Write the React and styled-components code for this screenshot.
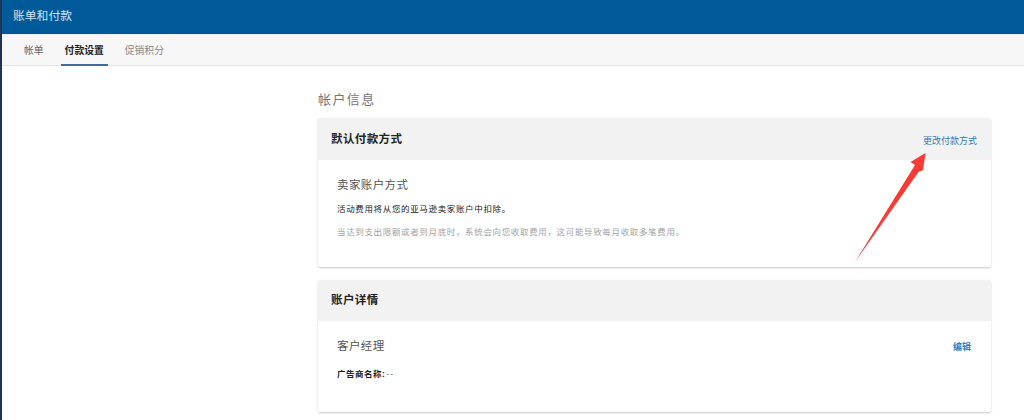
import React from 'react';
import styled, { createGlobalStyle } from 'styled-components';

const GlobalStyle = createGlobalStyle`
    html, body {
        margin: 0;
        padding: 0;
        background: #fff;
    }

    body {
        font-family: "Liberation Sans", "Noto Sans CJK SC", sans-serif;
    }
`;

const Page = styled.div`
    position: relative;
    width: 1024px;
    height: 420px;
    overflow: hidden;
    box-sizing: border-box;
    border-left: 2px solid #1c3553;
`;

const TopBar = styled.div`
    height: 34px;
    display: flex;
    align-items: center;
    padding: 0 0 6px 11px;
    box-sizing: border-box;
    background: #005a9a;
    color: #d5e4f0;
    font-size: 11.8px;
`;

const TabBar = styled.div`
    height: 32px;
    display: flex;
    gap: 21px;
    padding-left: 22px;
    box-sizing: border-box;
    background: #f7f7f7;
    border-top: 1px solid #e8eef3;
    border-bottom: 1px solid #e6e6e6;
`;

const Tab = styled.div`
    position: relative;
    display: flex;
    align-items: center;
    height: 30px;
    padding-bottom: 1px;
    box-sizing: border-box;
    font-size: 9.8px;
    font-weight: ${(props) => (props.$active ? 700 : 400)};
    color: ${(props) => (props.$active ? '#222' : props.$muted ? '#888' : '#666')};

    ${(props) => props.$active && `
        &::after {
            content: '';
            position: absolute;
            left: -4px;
            right: -4px;
            bottom: -1px;
            height: 2px;
            background: #44699f;
        }
    `}
`;

const Content = styled.div`
    display: flex;
    flex-direction: column;
    width: 673px;
    margin-left: 316px;
`;

const SectionTitle = styled.div`
    height: 52px;
    padding-top: 26px;
    box-sizing: border-box;
    font-size: 13px;
    line-height: 16px;
    letter-spacing: 1.4px;
    color: #777;
`;

const Card = styled.div`
    height: ${(props) => props.$height}px;
    margin-bottom: 13px;
    background: #fff;
    border-radius: 2px;
    box-shadow: 0 1px 2px rgba(0, 0, 0, 0.22);
    overflow: hidden;
`;

const CardHeader = styled.div`
    height: ${(props) => props.$height}px;
    display: flex;
    align-items: center;
    justify-content: space-between;
    padding: 0 14px 0 13px;
    background: #f2f2f2;
`;

const CardTitle = styled.div`
    font-size: 11.5px;
    font-weight: 700;
    letter-spacing: 0.4px;
    color: #222;
    margin-top: -3px;
`;

const HeaderLink = styled.a`
    font-size: 9px;
    color: #2f79b8;
    margin-top: 3px;
`;

const CardBody = styled.div`
    padding: 17px 19px 0;
`;

const BodyTitleRow = styled.div`
    display: flex;
    justify-content: space-between;
    align-items: center;
    padding-right: 1px;
`;

const BodyTitle = styled.div`
    font-size: 11.5px;
    line-height: 16px;
    letter-spacing: 0.4px;
    color: #555;
`;

const EditLink = styled.a`
    font-size: 9px;
    font-weight: 700;
    color: #2f7fc4;
`;

const Note = styled.div`
    margin-top: ${(props) => props.$top}px;
    font-size: 8.5px;
    line-height: 12px;
    letter-spacing: 0.65px;
    color: ${(props) => (props.$muted ? '#a3a3a3' : '#222')};
`;

const Strong = styled.b`
    color: #222;
    font-size: 8.5px;
    letter-spacing: 0.5px;
`;

const Dashes = styled.span`
    color: #777;
    margin-left: 1px;
    letter-spacing: 1px;
`;

const ArrowMark = styled.svg`
    position: absolute;
    left: 0;
    top: 0;
    pointer-events: none;
`;

const App = () => {
    return (
        <Page>
            <GlobalStyle />
            <TopBar>账单和付款</TopBar>
            <TabBar>
                <Tab>帐单</Tab>
                <Tab $active>付款设置</Tab>
                <Tab $muted>促销积分</Tab>
            </TabBar>

            <Content>
                <SectionTitle>帐户信息</SectionTitle>

                <Card $height={149}>
                    <CardHeader $height={42}>
                        <CardTitle>默认付款方式</CardTitle>
                        <HeaderLink>更改付款方式</HeaderLink>
                    </CardHeader>
                    <CardBody>
                        <BodyTitle>卖家账户方式</BodyTitle>
                        <Note $top={10}>活动费用将从您的亚马逊卖家账户中扣除。</Note>
                        <Note $muted $top={11}>当达到支出限额或者到月底时，系统会向您收取费用，这可能导致每月收取多笔费用。</Note>
                    </CardBody>
                </Card>

                <Card $height={132}>
                    <CardHeader $height={41}>
                        <CardTitle>账户详情</CardTitle>
                    </CardHeader>
                    <CardBody>
                        <BodyTitleRow>
                            <BodyTitle>客户经理</BodyTitle>
                            <EditLink>编辑</EditLink>
                        </BodyTitleRow>
                        <Note $top={14}><Strong>广告商名称:</Strong><Dashes>--</Dashes></Note>
                    </CardBody>
                </Card>
            </Content>

            <ArrowMark width="1024" height="420" viewBox="2 0 1024 420">
                <polygon points="855,262 915,165 910.5,162 925.5,153 923,170 918.5,172" fill="#f93a35" />
            </ArrowMark>
        </Page>
    );
};

export default App;
